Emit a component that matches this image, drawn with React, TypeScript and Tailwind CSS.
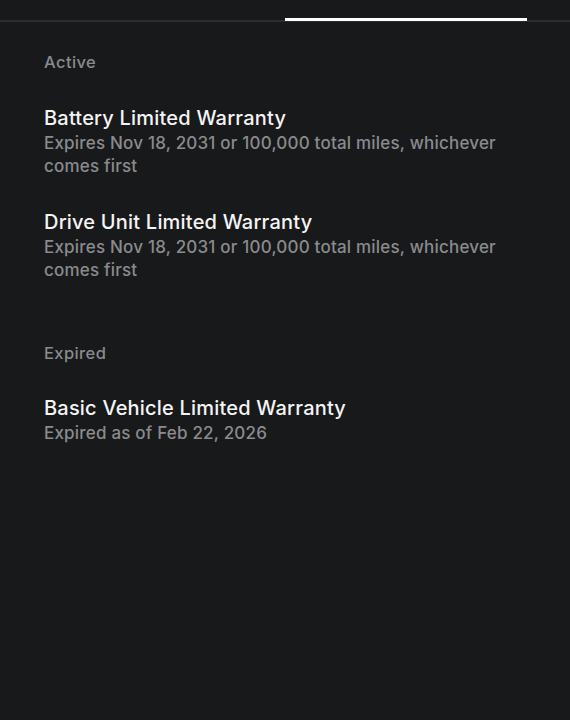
import React from "react";

const activeItems = [
  {
    title: "Battery Limited Warranty",
    detail: "Expires Nov 18, 2031 or 100,000 total miles, whichever comes first",
  },
  {
    title: "Drive Unit Limited Warranty",
    detail: "Expires Nov 18, 2031 or 100,000 total miles, whichever comes first",
  },
];

const WarrantyRow = ({ title, detail }: { title: string; detail: string }) => (
  <div className="mt-[30px]">
    <div className="text-[20px] leading-[28px] font-medium tracking-[0.2px] text-[#f4f4f4]">{title}</div>
    <div className="text-[17px] leading-[23px] font-medium tracking-[0.2px] text-[#8a8b8d]">{detail}</div>
  </div>
);

export default function App() {
  return (
    <div
      className="w-[570px] h-[720px] bg-[#18191b] overflow-hidden"
      style={{ fontFamily: "Inter, 'Noto Sans', sans-serif" }}
    >
      {/* tabs */}
      <div className="h-[22px] flex items-end border-b-2 border-[#2c2d30]">
        <div className="flex-1" />
        <div className="w-[242px] h-[3px] bg-white mr-[43px] mb-[-1px]" />
      </div>

      <div className="px-[44px]">
        <div className="mt-[28px] text-[16.5px] leading-[24px] font-medium tracking-[0.4px] text-[#8a8b8d]">Active</div>
        {activeItems.map((item) => (
          <WarrantyRow key={item.title} {...item} />
        ))}

        <div className="mt-[59px] text-[16.5px] leading-[24px] font-medium tracking-[0.4px] text-[#8a8b8d]">Expired</div>
        <div className="mt-[29px]">
          <div className="text-[20px] leading-[28px] font-medium tracking-[0.2px] text-[#f4f4f4]">
            Basic Vehicle Limited Warranty
          </div>
          <div className="text-[17px] leading-[23px] font-medium tracking-[0.2px] text-[#8a8b8d]">
            Expired as of Feb 22, 2026
          </div>
        </div>
      </div>
    </div>
  );
}
